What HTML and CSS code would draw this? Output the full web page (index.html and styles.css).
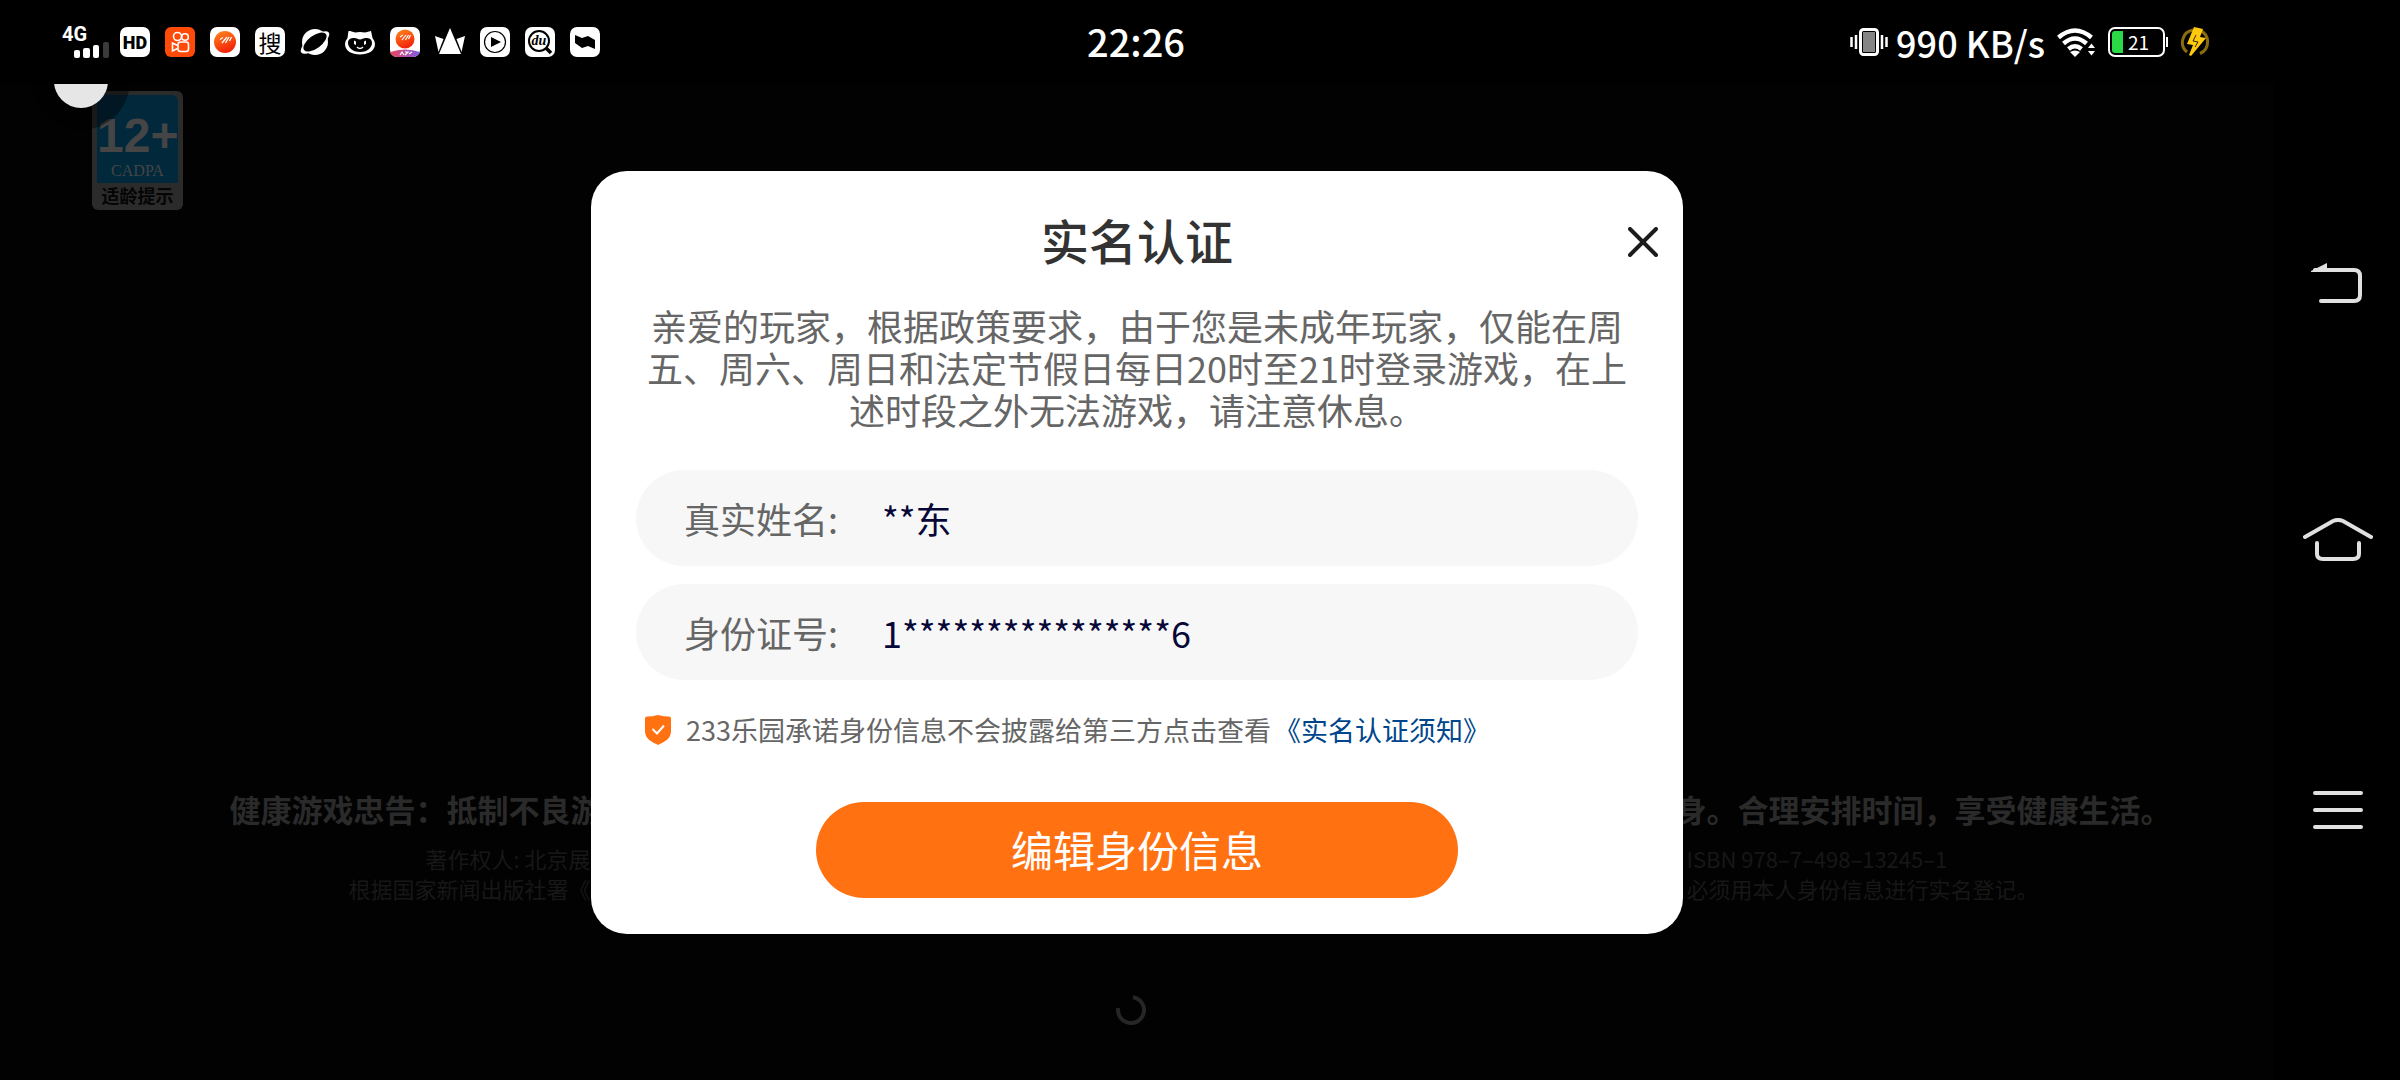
FILE: index.html
```html
<!DOCTYPE html>
<html lang="zh-CN">
<head>
  <meta charset="UTF-8" />
  <meta name="viewport" content="width=device-width, initial-scale=1.0"/>
  <title>实名认证</title>
  <link rel="stylesheet" href="styles.css">
</head>
<body>
  <header class="status-bar">
    <div class="status-left">
      <div class="signal">
        <span>4G</span>
        <svg width="36" height="16" viewBox="0 0 36 16" fill="#fff">
          <rect x="0" y="8" width="6" height="8" rx="2"/>
          <rect x="9" y="6" width="7" height="10" rx="2"/>
          <rect x="19" y="3" width="6" height="13" rx="2"/>
          <rect x="29" y="0" width="6" height="16" rx="2" fill="#3a3a3a"/>
        </svg>
      </div>
      <span class="app app-hd">HD</span>
      <svg class="app-icon" viewBox="0 0 30 30">
        <rect width="30" height="30" rx="6" fill="#ff4a08"/>
        <g fill="none" stroke="#fff" stroke-width="1.600">
          <circle cx="12.500" cy="9.500" r="4"/>
          <circle cx="20" cy="10" r="3.300"/>
          <rect x="13" y="15" width="10.500" height="9.500" rx="2.500"/>
          <path d="M12.500 18.500l-5-2.500v8l5-2.500"/>
        </g>
      </svg>
      <svg class="app-icon" viewBox="0 0 30 30">
        <defs>
          <linearGradient id="ball" x1="0" y1="0" x2="0.400" y2="1">
            <stop offset="0" stop-color="#ff8a1c"/>
            <stop offset="1" stop-color="#f3250b"/>
          </linearGradient>
        </defs>
        <rect width="30" height="30" rx="7" fill="#fff"/>
        <circle cx="15" cy="15" r="11" fill="url(#ball)"/>
        <path d="M10 12.500l3-2M12 16l5-6M15.500 16l3.500-6M19.500 14l2-4" stroke="#fff" stroke-width="1.300" fill="none"/>
      </svg>
      <span class="app app-sou">搜</span>
      <svg class="app-icon" viewBox="0 0 30 30">
        <circle cx="15" cy="15" r="13" fill="#fff"/>
        <ellipse cx="15" cy="15.500" rx="17" ry="6.500" transform="rotate(-36 15 15.500)" fill="#fff"/>
        <ellipse cx="15" cy="15" rx="13.500" ry="6.500" transform="rotate(-36 15 15)" fill="#000"/>
      </svg>
      <svg class="app-icon" viewBox="0 0 30 30">
        <path d="M5 4l5 1.500q5-1 10 0L26 4l1.500 7q2.500 3 2.500 6c0 7-7 10.500-15 10.500S0 24 0 17q0-3 2.500-6L3.500 4z" fill="#fff"/>
        <path d="M3 16c0-4 3-5 6-5 3 0 4 1.500 6 1.500s3-1.500 6-1.500 6 1 6 5-4 9-12 9S3 20 3 16z" fill="#000"/>
        <path d="M9 13.500l2 1v3.500l-2-1zM21 13.500l-2 1v3.500l2-1z" fill="#fff"/>
        <path d="M12 20q3 3 6 0" stroke="#fff" stroke-width="1.500" fill="none"/>
      </svg>
      <svg class="app-icon" viewBox="0 0 30 30">
        <defs>
          <linearGradient id="ribbon">
            <stop offset="0" stop-color="#f0455a"/>
            <stop offset="1" stop-color="#7d5bea"/>
          </linearGradient>
          <clipPath id="tile"><rect width="30" height="30" rx="7"/></clipPath>
        </defs>
        <rect width="30" height="30" rx="7" fill="#fff"/>
        <circle cx="15" cy="12" r="9.500" fill="url(#ball)"/>
        <path d="M10 10l3-2M12 13l4-5M15.500 13l3-5M18.500 12l2-4" stroke="#fff" stroke-width="1.200" fill="none"/>
        <path d="M0 25q15-5 30 0v5H0z" fill="url(#ribbon)" clip-path="url(#tile)"/>
        <path d="M10 28l2-3 2 3M15 25h3l-3 3M19 27l3-2" stroke="#fff" stroke-width="1.200" fill="none"/>
      </svg>
      <svg class="app-icon" viewBox="0 0 30 30" fill="#fff">
        <path d="M15 1l11 26H4z"/>
        <path d="M0 9l8.500 3L3.500 25z"/>
        <path d="M30 9l-8.500 3L26.500 25z"/>
      </svg>
      <svg class="app-icon" viewBox="0 0 30 30">
        <rect width="30" height="30" rx="7" fill="#fff"/>
        <circle cx="15" cy="15" r="10.500" fill="none" stroke="#000" stroke-width="1.200"/>
        <path d="M11 10l10 5-10 5z"/>
      </svg>
      <svg class="app-icon" viewBox="0 0 30 30">
        <rect width="30" height="30" rx="7" fill="#fff"/>
        <circle cx="14" cy="14" r="10" fill="none" stroke="#000" stroke-width="2"/>
        <path d="M21 21l5 5" stroke="#000" stroke-width="3.500"/>
        <text x="14" y="18" text-anchor="middle" class="du">du</text>
      </svg>
      <svg class="app-icon" viewBox="0 0 30 30">
        <rect width="30" height="30" rx="7" fill="#fff"/>
        <path d="M5 8l7 3 6-2 7 4v9l-7-3-6 2-7-5z"/>
      </svg>
    </div>
    <time class="clock">22:26</time>
    <div class="status-right">
      <svg width="38" height="28" viewBox="0 0 38 28">
        <rect x="10.500" y="1.500" width="17" height="25" rx="3" fill="#000" stroke="#fff" stroke-width="3"/>
        <rect x="13" y="4" width="12" height="20" fill="#858585"/>
        <path d="M1.500 9v10M6 7v14M32 7v14M36.500 9v10" stroke="#fff" stroke-width="2.500"/>
      </svg>
      <span class="speed">990 KB/s</span>
      <svg width="39" height="29" viewBox="0 0 39 29">
        <g fill="none" stroke="#fff" stroke-width="4.500">
          <path d="M1.500 9.500Q18 -4.500 34.500 9.500"/>
          <path d="M6.500 15.500Q18 5.500 29.500 15.500"/>
          <path d="M11.500 21Q18 15.500 24.500 21"/>
        </g>
        <path d="M13 24q5-3 10 0l-5 5z" fill="#fff"/>
        <path d="M31 20h7l-3.500-4.500zM31 23h7l-3.500 4.500z" fill="#fff"/>
      </svg>
      <div class="battery"><i></i><span>21</span></div>
      <svg width="30" height="30" viewBox="0 0 30 30">
        <path d="M13 3a12.500 12.500 0 0 0-6 22M20 3.500a12.500 12.500 0 0 1 0 23" stroke="#8a6c10" stroke-width="3" fill="none"/>
        <path d="M14 0l9 2-3 8 6 1-15 18-2-1 4-10-6-1z" fill="#ffc90e"/>
        <path d="M16 8l-3 6 5 1-3 5" stroke="#000" stroke-width="0.800" fill="none"/>
      </svg>
    </div>
  </header>

  <div class="main">
    <div class="stage">
      <div class="float-ball"></div>
      <div class="scene">
        <div class="age-badge">
          <div class="age"><b>12+</b><span>CADPA</span></div>
          <p>适龄提示</p>
        </div>
        <div class="advice">
          <span>健康游戏忠告：抵制不良游</span>
          <span>身。合理安排时间，享受健康生活。</span>
        </div>
        <div class="legal">
          <span>著作权人: 北京展</span>
          <span>ISBN 978–7–498–13245–1</span>
          <span>根据国家新闻出版社署《</span>
          <span>必须用本人身份信息进行实名登记。</span>
        </div>
        <svg class="spinner" width="30" height="30" viewBox="0 0 30 30">
          <path d="M17 2.200A13 13 0 1 1 2.200 13" fill="none" stroke="#262626" stroke-width="4"/>
        </svg>
      </div>

      <div class="dialog" role="dialog" aria-labelledby="dialogTitle">
        <button class="close" type="button" aria-label="关闭">
          <svg width="30" height="30" viewBox="0 0 30 30"><path d="M2 2l26 26M28 2L2 28" stroke="#1c1c1c" stroke-width="4" stroke-linecap="round"/></svg>
        </button>
        <h1 id="dialogTitle">实名认证</h1>
        <p class="message">亲爱的玩家，根据政策要求，由于您是未成年玩家，仅能在周五、周六、周日和法定节假日每日20时至21时登录游戏，在上述时段之外无法游戏，请注意休息。</p>
        <form>
          <div class="field">
            <label for="realName">真实姓名:</label>
            <input type="text" id="realName" value="**东">
          </div>
          <div class="field">
            <label for="idNumber">身份证号:</label>
            <input type="text" id="idNumber" value="1****************6">
          </div>
          <div class="promise">
            <svg width="26" height="30" viewBox="0 0 26 30">
              <path d="M13 0q6 1.500 11 1.500 2 0 2 2V16c0 8-7 11-13 14C7 27 0 24 0 16V3.500q0-2 2-2Q7 1.500 13 0z" fill="#ff7111"/>
              <path d="M7.500 14l4.500 4.500 7-8" fill="none" stroke="#fff" stroke-width="2"/>
            </svg>
            <p>233乐园承诺身份信息不会披露给第三方点击查看<a href="#">《实名认证须知》</a></p>
          </div>
          <button class="submit" type="button">编辑身份信息</button>
        </form>
      </div>
    </div>

    <nav class="nav-bar">
      <button type="button" aria-label="返回">
        <svg width="70" height="70" viewBox="0 0 70 70">
          <path d="M12 35h39q6 0 6 6v19q0 6-6 6H18" fill="none" stroke="#e0e0e0" stroke-width="4" stroke-linecap="round"/>
          <path d="M8 36L24 28v9H8z" fill="#e0e0e0"/>
        </svg>
      </button>
      <button type="button" aria-label="主页">
        <svg width="70" height="44" viewBox="0 0 70 44" fill="none" stroke="#e0e0e0" stroke-width="4" stroke-linecap="round">
          <path d="M2 19L30 3q5-2 10 0l28 16"/>
          <path d="M14 25v11q0 5 6 5h30q6 0 6-5V25"/>
        </svg>
      </button>
      <button type="button" aria-label="菜单">
        <svg width="50" height="40" viewBox="0 0 50 40" stroke="#e0e0e0" stroke-width="4" stroke-linecap="round">
          <path d="M2 3h46M2 20h46M2 37h46"/>
        </svg>
      </button>
    </nav>
  </div>
</body>
</html>
```
FILE: styles.css
```css
* { margin: 0; padding: 0; box-sizing: border-box; }
body {
  font-family: "Noto Sans CJK SC", sans-serif;
  background: #000;
  color: #fff;
  min-height: 100vh;
  display: flex;
  flex-direction: column;
}
button {
  border: none;
  background: transparent;
  cursor: pointer;
}
svg { display: block; flex: none; }

/* status bar */
.status-bar {
  height: 84px;
  padding: 0 190px 0 62px;
  display: grid;
  grid-template-columns: 1fr auto 1fr;
  align-items: center;
}
.status-left {
  display: flex;
  align-items: center;
  gap: 15px;
}
.signal {
  width: 43px;
  display: flex;
  flex-direction: column;
}
.signal span {
  font-family: Roboto, sans-serif;
  font-size: 20px;
  line-height: 16px;
  font-weight: bold;
}
.signal svg { margin-left: 12px; }
.app, .app-icon {
  width: 30px;
  height: 30px;
}
.app {
  background: #fff;
  color: #000;
  border-radius: 7px;
  display: flex;
  align-items: center;
  justify-content: center;
}
.app-hd {
  font-family: Roboto, sans-serif;
  font-size: 18px;
  font-weight: 900;
}
.app-sou {
  font-size: 23px;
  line-height: 30px;
  font-weight: 400;
}
.du {
  font: italic bold 14px "Liberation Serif", serif;
}
.clock {
  padding-bottom: 3px;
  font-size: 38px;
  line-height: 48px;
  font-weight: 500;
}
.status-right {
  display: flex;
  align-items: center;
  justify-content: flex-end;
}
.speed {
  font-size: 36px;
  line-height: 48px;
  font-weight: 500;
  margin: 0 12px 0 8px;
}
.battery {
  position: relative;
  width: 57px;
  height: 30px;
  margin: 0 15px 0 12px;
  padding: 2px;
  border: 2px solid #fff;
  border-radius: 7px;
  display: flex;
  align-items: center;
}
.battery i {
  width: 11px;
  height: 22px;
  background: #2bd845;
  border-radius: 3px 0 0 3px;
}
.battery span {
  margin-left: 5px;
  font-size: 19px;
  line-height: 22px;
  font-weight: 400;
}
.battery::after {
  content: "";
  position: absolute;
  right: -5px;
  top: 8px;
  width: 2px;
  height: 10px;
  background: #fff;
}

/* game screen */
.main {
  flex: 1;
  display: flex;
}
.stage {
  flex: 1;
  position: relative;
  overflow: hidden;
  display: grid;
  background: #020202;
}
.scene, .dialog { grid-area: 1 / 1; }
.float-ball {
  position: absolute;
  left: 54px;
  top: -30px;
  width: 54px;
  height: 54px;
  border-radius: 50%;
  background: #e6e6e6;
  box-shadow: 0 0 0 22px rgba(0, 0, 0, 0.4);
  z-index: 1;
}
.scene {
  padding: 7px 0 55px;
  display: flex;
  flex-direction: column;
}
.age-badge {
  width: 91px;
  margin-left: 92px;
  padding: 4px 5px 3px;
  background: #2b2b2b;
  border-radius: 6px;
  color: #454545;
  text-align: center;
}
.age {
  height: 88px;
  padding-top: 16px;
  background: #02283c;
  border-radius: 6px 6px 0 0;
  display: flex;
  flex-direction: column;
}
.age b {
  font-family: "Liberation Sans Narrow", "Liberation Sans", sans-serif;
  font-size: 48px;
  line-height: 50px;
}
.age span {
  font-family: "Liberation Serif", serif;
  font-size: 16px;
  line-height: 20px;
}
.age-badge p {
  color: #050505;
  font-size: 18px;
  line-height: 24px;
  font-weight: bold;
}
.advice, .legal {
  padding-left: 3px;
  display: grid;
  grid-template-columns: 1fr 1fr;
  white-space: nowrap;
}
.advice {
  margin-top: auto;
  column-gap: 1074px;
  font-size: 31px;
  line-height: 42px;
  font-weight: bold;
  color: #2a2a2a;
}
.legal {
  margin-top: 13px;
  column-gap: 1096px;
  font-size: 22px;
  line-height: 30px;
  color: #171717;
}
.advice span:nth-child(odd),
.legal span:nth-child(odd) { text-align: right; }
.spinner {
  align-self: center;
  margin: 92px 12px 0 0;
}

/* real-name dialog */
.dialog {
  position: relative;
  align-self: start;
  justify-self: center;
  width: 1092px;
  max-width: 100%;
  margin-top: 87px;
  padding: 32px 45px 36px;
  background: #fff;
  border-radius: 36px;
}
.close {
  position: absolute;
  right: 10px;
  top: 41px;
  width: 60px;
  height: 60px;
  display: flex;
  align-items: center;
  justify-content: center;
}
.dialog h1 {
  font-size: 48px;
  line-height: 72px;
  font-weight: 500;
  color: #333;
  text-align: center;
}
.message {
  margin-top: 29px;
  font-size: 36px;
  line-height: 42px;
  color: #666;
  text-align: center;
}
form { margin-top: 40px; }
.field {
  height: 96px;
  margin-bottom: 18px;
  padding: 0 48px;
  background: #f7f7f8;
  border-radius: 48px;
  display: flex;
  align-items: center;
}
.field label {
  width: 198px;
  font-size: 36px;
  color: #666;
}
.field input {
  flex: 1;
  min-width: 0;
  border: none;
  outline: none;
  background: transparent;
  font-family: inherit;
  font-size: 36px;
  color: #080838;
}
.promise {
  margin: 32px 0 0 9px;
  display: flex;
  align-items: center;
  gap: 15px;
  font-size: 27px;
  line-height: 36px;
  color: #666;
}
.promise a {
  margin-left: 3px;
  color: #00468c;
  text-decoration: none;
}
.submit {
  display: block;
  width: 642px;
  max-width: 100%;
  height: 96px;
  margin: 54px auto 0;
  padding-bottom: 3px;
  background: #ff7111;
  border-radius: 48px;
  font-family: inherit;
  font-size: 42px;
  color: #fff;
}

/* system navigation */
.nav-bar {
  width: 126px;
  padding: 51px 0 135px 2px;
  display: flex;
  flex-direction: column;
}
.nav-bar button {
  flex: 1;
  display: flex;
  align-items: center;
  justify-content: center;
}
```
